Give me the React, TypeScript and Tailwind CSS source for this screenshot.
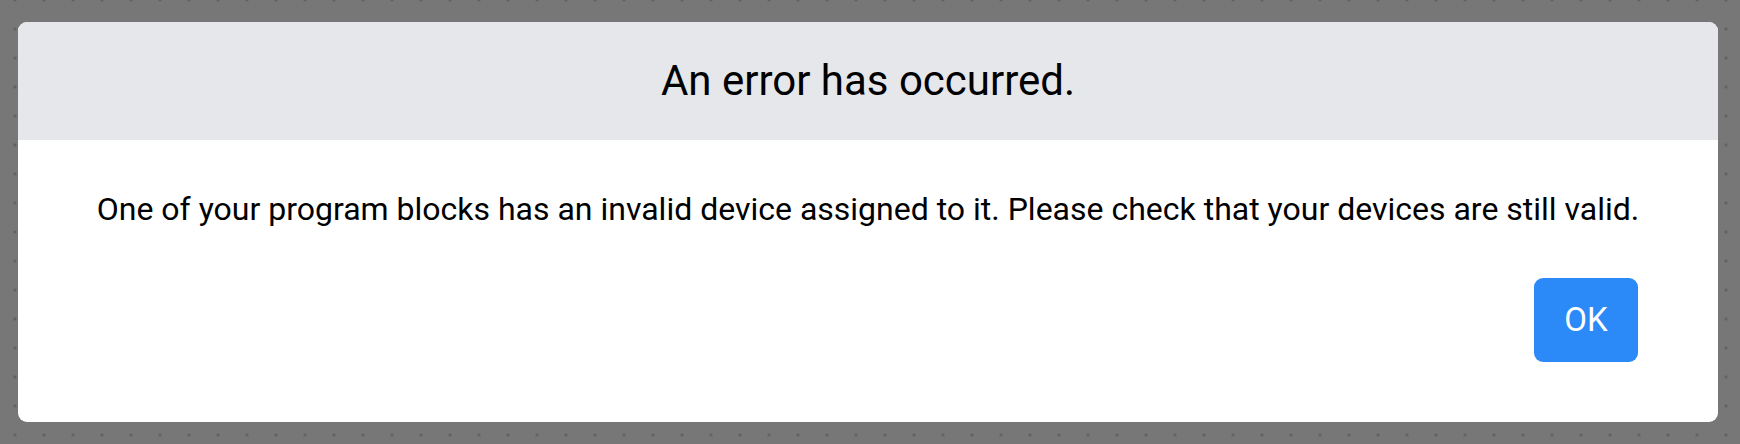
import React from 'react';

export default function App() {
  return (
    <div
      className="w-full h-[444px] bg-[#777777] pt-[22px] px-[18px] bg-[radial-gradient(circle,#5e5e5e_1.2px,transparent_1.6px)] bg-[size:29px_29px] bg-[position:0.5px_-14.5px]"
      style={{ fontFamily: 'Roboto, "Noto Sans", sans-serif' }}
    >
      <div className="w-[1700px] h-[400px] bg-white rounded-[9px] overflow-hidden flex flex-col">
        <div className="h-[118px] bg-[#e6e7ea] flex items-center justify-center">
          <h2 className="text-[42px] leading-none text-black">An error has occurred.</h2>
        </div>
        <div className="flex-1 flex flex-col px-[80px] pt-[49px]">
          <p className="text-[32px] leading-[40px] text-black text-center whitespace-nowrap -mx-[60px]">
            One of your program blocks has an invalid device assigned to it. Please check that your devices are still valid.
          </p>
          <div className="flex justify-end mt-[49px]">
            <button className="w-[104px] h-[84px] rounded-[9px] bg-[#2b8af7] text-white text-[33px]">OK</button>
          </div>
        </div>
      </div>
    </div>
  );
}
